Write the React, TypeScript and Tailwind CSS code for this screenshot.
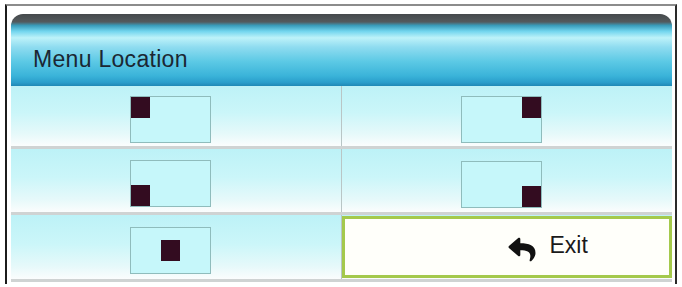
import { FaReply } from 'react-icons/fa';

type Corner = 'tl' | 'bl' | 'c' | 'tr' | 'br';

function PosBox({ at }: { at: Corner }) {
    const place = {
        tl: 'items-start justify-start',
        bl: 'items-end justify-start',
        c: 'items-center justify-center',
        tr: 'items-start justify-end',
        br: 'items-end justify-end',
    }[at];

    return (
        <div className={`flex ${place} w-[81px] h-[47px] border border-[#8fbcbc] bg-[#c6f7fa]`}>
            <div className="w-[19px] h-[21px] bg-[#330c20]"></div>
        </div>
    );
}

function Cell({ at, right, top }: { at: Corner; right?: boolean; top: string }) {
    return (
        <div className={`flex items-start pl-[119px] ${top} ${right ? '' : 'border-r border-[#b9c6c6]'}`}>
            <PosBox at={at} />
        </div>
    );
}

export default function App() {
    const row =
        'grid grid-cols-2 border-b-[3px] border-[#cfd3d3] bg-[linear-gradient(to_bottom,#bdf2f7_0%,#cbf6f9_45%,#e6f9fa_80%,#fbfdfd_100%)]';

    return (
        <div className="w-[682px] h-[287px] bg-white pt-[4px] pl-[5px] font-['Liberation_Sans',Arial,sans-serif]">
            <div className="w-[672px] h-[280px] border-l-2 border-r-2 border-t-2 border-l-[#1c1c1c] border-r-[#2a2a2a] border-t-[#8c8c8c] pl-[4px] pt-[8px] pr-[3px]">

                {/* header */}
                <div className="h-[72px] rounded-t-[12px] flex items-center pl-[22px] pt-[18px] bg-[linear-gradient(to_bottom,#45494c_0%,#535a5d_11%,#3a9cba_16%,#72d5ee_24%,#bdf2f9_33%,#8fdcf0_46%,#5cc9e5_66%,#3ab3d9_86%,#2a9ecb_95%,#1f88b6_100%)]">
                    <span className="text-[23px] text-[#1b2733] tracking-[0.3px]">Menu Location</span>
                </div>

                <div className={`${row} h-[63px]`}>
                    <Cell at="tl" top="pt-[10px]" />
                    <Cell at="tr" top="pt-[10px]" right />
                </div>

                <div className={`${row} h-[66px]`}>
                    <Cell at="bl" top="pt-[11px]" />
                    <Cell at="br" top="pt-[12px]" right />
                </div>

                <div className={`${row} h-[67px]`}>
                    <Cell at="c" top="pt-[12px]" />
                    <div className="flex items-center pl-[161px] mt-[1px] border-[3px] border-[#a4c94c] bg-[#fffffa] mb-[1px]">
                        <FaReply className="w-[32px] h-[27px] text-[#111] mt-[4px]" />
                        <span className="ml-[12px] text-[23px] text-[#1a1a1a] -mt-[3px]">Exit</span>
                    </div>
                </div>

            </div>
        </div>
    );
}
